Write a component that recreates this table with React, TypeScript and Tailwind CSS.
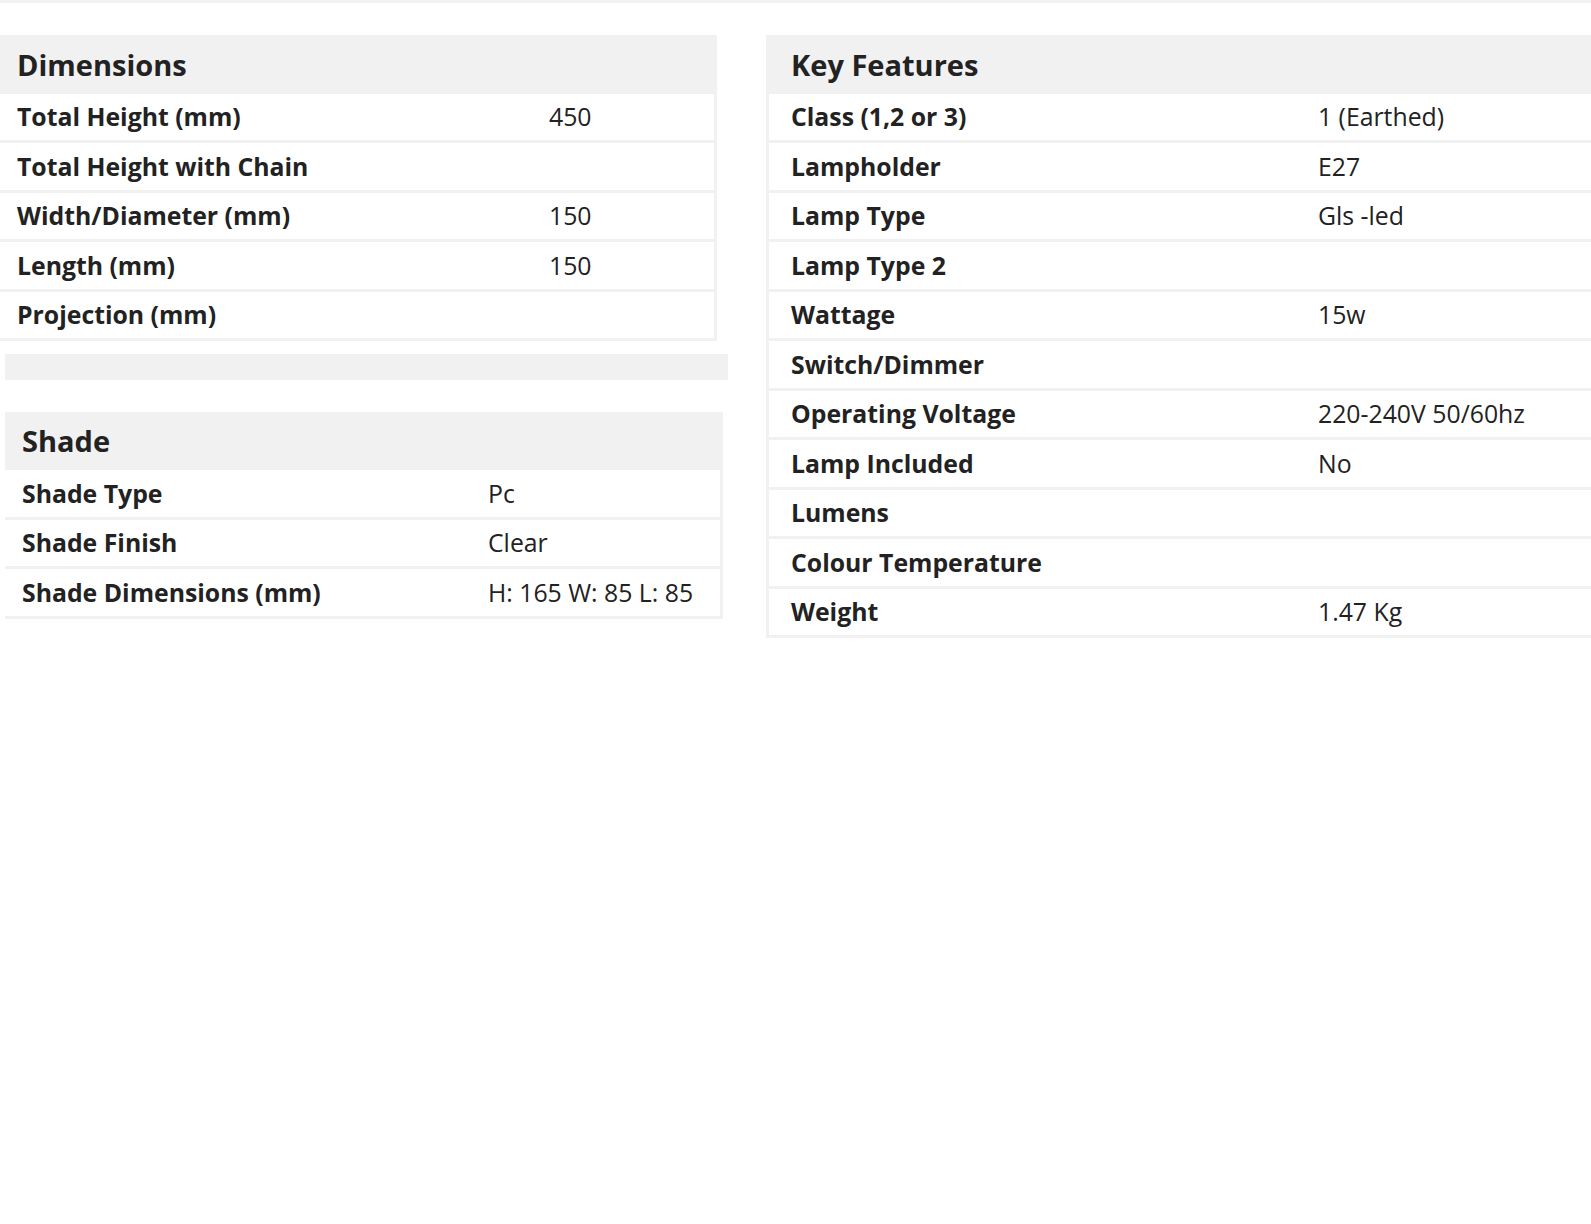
import React from "react";

type Row = [string, string];

const dims: Row[] = [
  ["Total Height (mm)", "450"],
  ["Total Height with Chain", ""],
  ["Width/Diameter (mm)", "150"],
  ["Length (mm)", "150"],
  ["Projection (mm)", ""],
];

const shade: Row[] = [
  ["Shade Type", "Pc"],
  ["Shade Finish", "Clear"],
  ["Shade Dimensions (mm)", "H: 165 W: 85 L: 85"],
];

const features: Row[] = [
  ["Class (1,2 or 3)", "1 (Earthed)"],
  ["Lampholder", "E27"],
  ["Lamp Type", "Gls -led"],
  ["Lamp Type 2", ""],
  ["Wattage", "15w"],
  ["Switch/Dimmer", ""],
  ["Operating Voltage", "220-240V 50/60hz"],
  ["Lamp Included", "No"],
  ["Lumens", ""],
  ["Colour Temperature", ""],
  ["Weight", "1.47 Kg"],
];

export default function App() {
  return (
    <div className="w-[1591px] h-[1224px] bg-white overflow-hidden font-['Open_Sans',sans-serif] text-[#222]">
      <div className="h-[3px] w-full bg-[#f2f2f2]" />
      <div className="flex items-start mt-[32px]">
        {/* Left column */}
        <div className="w-[728px] flex flex-col">
          {/* Dimensions */}
          <div className="w-[717px] bg-[#f1f1f1] pr-[3px] pb-[3px]">
            <div className="h-[58.5px] flex items-center pl-[17px] text-[29px] font-bold">Dimensions</div>
            {dims.map(([k, v], i) => (
              <div
                key={k}
                className={
                  "h-[46.5px] bg-white flex items-center pl-[17px] text-[24.8px] " +
                  (i < dims.length - 1 ? "mb-[3px]" : "")
                }
              >
                <div className="w-[532px] font-bold">{k}</div>
                <div>{v}</div>
              </div>
            ))}
          </div>
          <div className="ml-[5px] mt-[12.5px] w-[723px] h-[26.5px] bg-[#f1f1f1]" />
          {/* Shade */}
          <div className="ml-[5px] mt-[31.5px] w-[718px] bg-[#f1f1f1] pr-[3px] pb-[3px]">
            <div className="h-[58.5px] flex items-center pl-[17px] text-[29px] font-bold">Shade</div>
            {shade.map(([k, v], i) => (
              <div
                key={k}
                className={
                  "h-[46.5px] bg-white flex items-center pl-[17px] text-[24.8px] " +
                  (i < shade.length - 1 ? "mb-[3px]" : "")
                }
              >
                <div className="w-[466px] font-bold">{k}</div>
                <div>{v}</div>
              </div>
            ))}
          </div>
        </div>
        {/* Right column */}
        <div className="ml-[38px] w-[860px] shrink-0 bg-[#f1f1f1] pl-[3px] pb-[3px]">
          <div className="h-[58.5px] flex items-center pl-[22px] text-[29px] font-bold">Key Features</div>
          {features.map(([k, v], i) => (
            <div
              key={k}
              className={
                "h-[46.5px] bg-white flex items-center pl-[22px] text-[24.8px] " +
                (i < features.length - 1 ? "mb-[3px]" : "")
              }
            >
              <div className="w-[527px] font-bold">{k}</div>
              <div>{v}</div>
            </div>
          ))}
        </div>
      </div>
    </div>
  );
}
